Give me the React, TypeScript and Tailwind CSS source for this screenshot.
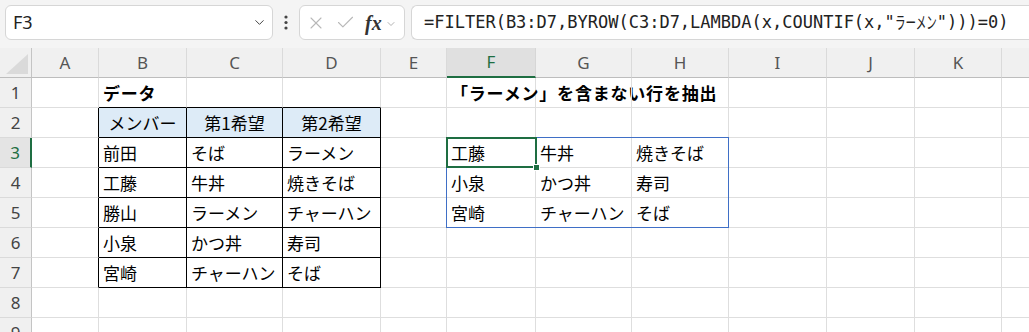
import { Check, ChevronDown, X } from 'lucide-react'

const COLS: [string, number][] = [
  ['A', 67],
  ['B', 88],
  ['C', 96],
  ['D', 98],
  ['E', 66],
  ['F', 89],
  ['G', 96],
  ['H', 97],
  ['I', 98],
  ['J', 88],
  ['K', 87],
  ['L', 80],
]

const ROWS = [1, 2, 3, 4, 5, 6, 7, 8, 9]

// cell text keyed by "B3" etc.
const CELLS: Record<string, string> = {
  B1: 'データ',
  F1: '「ラーメン」を含まない行を抽出',
  B2: 'メンバー',
  C2: '第1希望',
  D2: '第2希望',
  B3: '前田',
  C3: 'そば',
  D3: 'ラーメン',
  B4: '工藤',
  C4: '牛丼',
  D4: '焼きそば',
  B5: '勝山',
  C5: 'ラーメン',
  D5: 'チャーハン',
  B6: '小泉',
  C6: 'かつ丼',
  D6: '寿司',
  B7: '宮崎',
  C7: 'チャーハン',
  D7: 'そば',
  F3: '工藤',
  G3: '牛丼',
  H3: '焼きそば',
  F4: '小泉',
  G4: 'かつ丼',
  H4: '寿司',
  F5: '宮崎',
  G5: 'チャーハン',
  H5: 'そば',
}

const inTable = (c: string, r: number) => 'BCD'.includes(c) && r >= 2 && r <= 7

function Cell({ col, row }: { col: string; row: number }) {
  const text = CELLS[col + row]
  const table = inTable(col, row)
  const head = table && row === 2
  const rightBlack = table || (col === 'A' && row >= 2 && row <= 7)
  const bottomBlack = table || ('BCD'.includes(col) && row === 1)
  const bold = row === 1

  return (
    <div
      className={`flex items-center border-r border-b whitespace-nowrap overflow-visible text-[17px] text-black ${
        rightBlack ? 'border-r-black' : 'border-r-[#dedede]'
      } ${bottomBlack ? 'border-b-black' : 'border-b-[#dedede]'} ${head ? 'bg-[#ddebf7] justify-center' : 'pl-[4px]'} ${
        bold ? 'font-bold tracking-[0.8px]' : ''
      }`}
    >
      {text}
    </div>
  )
}

function FormulaBar() {
  return (
    <div className="h-[48px] bg-[#f4f4f4] flex items-start pt-[5px] pl-[5px]">
      <div className="w-[268px] h-[35px] bg-white border border-[#d6d6d6] rounded-[6px] flex items-center pl-[7px] pr-[5px]">
        <span className="flex-1 text-[18px] text-[#222] font-['Noto_Sans',sans-serif]">F3</span>
        <ChevronDown size={15} strokeWidth={1.6} className="text-[#444]" />
      </div>
      <div className="w-[26px] h-[35px] flex items-center justify-center">
        <svg width="4" height="15" viewBox="0 0 4 15">
          <circle cx="2" cy="2" r="1.6" fill="#444" />
          <circle cx="2" cy="7.5" r="1.6" fill="#444" />
          <circle cx="2" cy="13" r="1.6" fill="#444" />
        </svg>
      </div>
      <div className="w-[106px] h-[35px] bg-white border border-[#d6d6d6] rounded-[6px] flex items-center pl-[6px]">
        <X size={20} strokeWidth={1.3} className="text-[#b8b8b8]" />
        <Check size={21} strokeWidth={1.3} className="text-[#b8b8b8] ml-[9px]" />
        <span className="ml-[9px] text-[20px] leading-none italic font-bold text-[#333] font-['Liberation_Serif',serif]">
          fx
        </span>
        <ChevronDown size={12} strokeWidth={1.5} className="text-[#999] ml-[3px] mt-[2px]" />
      </div>
      <div className="ml-[6px] flex-1 h-[35px] bg-white border border-[#d6d6d6] border-r-0 rounded-l-[6px] flex items-center pl-[12px] text-[17px] text-[#222] whitespace-nowrap font-['DejaVu_Sans_Mono',monospace]">
        =FILTER(B3:D7,BYROW(C3:D7,LAMBDA(x,COUNTIF(x,"
        <span className="inline-block w-[42px]">
          <span className="inline-block scale-x-[0.62] origin-left font-['Noto_Sans_CJK_JP',sans-serif]">ラーメン</span>
        </span>
        ")))=0)
      </div>
    </div>
  )
}

export default function App() {
  return (
    <div className="w-[1029px] h-[332px] overflow-hidden bg-white font-['Noto_Sans_CJK_JP',sans-serif]">
      <FormulaBar />
      <div className="relative">
        <div className="grid grid-cols-[32px_67px_88px_96px_98px_66px_89px_96px_97px_98px_88px_87px_80px] auto-rows-[30px]">
          {/* corner */}
          <div className="relative bg-[#f0f0f0] border-r border-b border-r-[#c4c4c4] border-b-[#bdbdbd]">
            <svg className="absolute right-[3px] bottom-[3px]" width="22" height="20" viewBox="0 0 22 20">
              <polygon points="22,0 22,20 0,20" fill="#dadada" />
            </svg>
          </div>
          {COLS.map(([c]) => (
            <div
              key={c}
              className={`flex items-center justify-center border-r text-[17px] font-['Noto_Sans',sans-serif] ${
                c === 'F'
                  ? 'bg-[#e0e0e0] text-[#1e6e42] border-r-[#d6d6d6] border-b-2 border-b-[#1e6e42]'
                  : 'bg-[#f0f0f0] text-[#555] border-r-[#dadada] border-b border-b-[#bdbdbd]'
              }`}
            >
              {c}
            </div>
          ))}
          {ROWS.map((r) => [
            <div
              key={'h' + r}
              className={`flex items-center justify-center border-b text-[17px] font-['Noto_Sans',sans-serif] border-b-[#dadada] ${
                r === 3
                  ? 'bg-[#e4e4e4] text-[#1e6e42] border-r-2 border-r-[#1e6e42]'
                  : 'bg-[#f0f0f0] text-[#444] border-r border-r-[#c4c4c4]'
              }`}
            >
              {r}
            </div>,
            ...COLS.map(([c]) => <Cell key={c + r} col={c} row={r} />),
          ])}
        </div>

        {/* spill range F3:H5 */}
        <div className="absolute left-[446px] top-[89px] w-[283px] h-[91px] border border-[#3f6fc6] pointer-events-none" />
        {/* active cell F3 */}
        <div className="absolute left-[446px] top-[89px] w-[91px] h-[31px] border-2 border-[#1e6e42] pointer-events-none" />
        <div className="absolute left-[533px] top-[116px] w-[7px] h-[7px] bg-[#1e6e42] border border-white" />
      </div>
    </div>
  )
}
